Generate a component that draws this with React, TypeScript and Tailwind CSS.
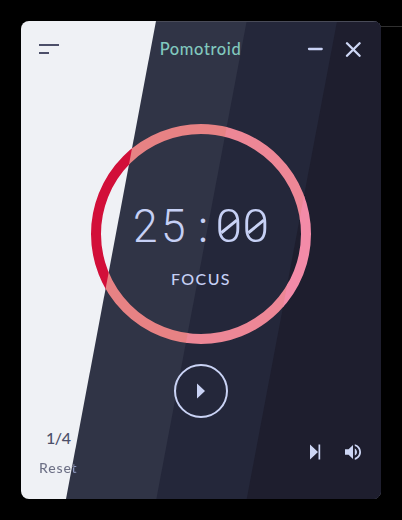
import type { ReactNode } from 'react';

const slices = [
  { clip: 'polygon(37.5% 0, 100% 0, 100% 100%, 12.5% 100%)', color: 'bg-[#303446]' },
  { clip: 'polygon(62.7% 0, 100% 0, 100% 100%, 37.6% 100%)', color: 'bg-[#24273a]' },
  { clip: 'polygon(87.8% 0, 100% 0, 100% 100%, 62.7% 100%)', color: 'bg-[#1e1e2e]' },
];

const ringSlices = [
  { id: 'light', points: '-70,-103 66,-103 -24,375 -70,375', color: '#d20f39' },
  { id: 'slate', points: '65,-103 156.5,-103 66.2,375 -25,375', color: '#e78284' },
  { id: 'navy', points: '155.7,-103 247,-103 156.7,375 65.4,375', color: '#ed8796' },
  { id: 'night', points: '246,-103 290,-103 290,375 155.7,375', color: '#f38ba8' },
];

function Backdrop() {
  return (
    <div className="absolute inset-0 bg-[#eff1f5]">
      {slices.map((s) => (
        <div key={s.color} className={`absolute inset-0 ${s.color}`} style={{ clipPath: s.clip }} />
      ))}
      <div className="absolute left-[135px] right-[5px] top-0 h-px bg-[#494b58]" />
    </div>
  );
}

function Dial({ children }: { children: ReactNode }) {
  return (
    <div className="relative h-[220px] w-[220px]">
      <svg className="absolute inset-0" width="220" height="220" viewBox="0 0 220 220" fill="none">
        {ringSlices.map((s) => (
          <g key={s.id}>
            <clipPath id={s.id}>
              <polygon points={s.points} />
            </clipPath>
            <circle cx="110" cy="110" r="105" stroke={s.color} strokeWidth="10" clipPath={`url(#${s.id})`} />
          </g>
        ))}
      </svg>
      <div className="relative flex flex-col items-center">{children}</div>
    </div>
  );
}

function Digit({ value }: { value: string }) {
  if (value === ':') {
    return <span className="-mt-[2px] flex w-[27.6px] justify-center pl-[4px] font-['Lato',sans-serif] text-[48px] font-light">:</span>;
  }
  return (
    <span className="relative flex w-[27.6px] justify-center">
      <span className={value === '0' ? 'scale-x-[1.04]' : '-translate-x-[0.5px] scale-x-[0.96]'}>{value}</span>
      {value === '0' && (
        <span className="absolute left-[4px] top-[25.5px] h-[2.6px] w-[20px] -rotate-[39deg] bg-[#cad3f5]" />
      )}
    </span>
  );
}

export default function App() {
  return (
    <div className="relative h-[520px] w-[402px] bg-black p-[21px] font-['Lato',sans-serif] text-[#c6d0f5]">
      <div className="absolute right-0 top-[26px] h-px w-[22px] bg-[#303030]" />
      <div className="relative flex h-[478px] w-[360px] flex-col overflow-hidden rounded-lg">
        <Backdrop />
        <header className="relative flex h-[56px] items-center justify-between pl-[18px] pr-[20px]">
          <button className="flex w-[55px] flex-col gap-[6px]" aria-label="Menu">
            <span className="h-[2px] w-[20px] bg-[#4c4f69]" />
            <span className="h-[2px] w-[10px] bg-[#4c4f69]" />
          </button>
          <h1 className="text-[16.5px] font-medium tracking-[0.6px] text-[#81c8be]">Pomotroid</h1>
          <div className="flex w-[54px] items-center justify-between">
            <svg width="16" height="16" viewBox="0 0 16 16" stroke="#cad3f5" strokeWidth="2.3" strokeLinecap="round">
              <path d="M2 8H14.7" />
            </svg>
            <svg width="16" height="16" viewBox="0 0 16 16" stroke="#cdd6f4" strokeWidth="2.3" strokeLinecap="round">
              <path d="M2 2.2L14.6 14.8M14.6 2.2L2 14.8" />
            </svg>
          </div>
        </header>
        <main className="relative flex flex-col items-center pt-[47px]">
          <Dial>
            <div className="mt-[75px] flex h-[54px] font-['Roboto',sans-serif] text-[46px] font-light leading-[54px]">
              {'25:00'.split('').map((c, i) => (
                <Digit key={i} value={c} />
              ))}
            </div>
            <p className="mt-[14px] text-[16px] font-medium leading-[24px] tracking-[1.4px]">FOCUS</p>
          </Dial>
          <button className="mt-[20px] flex h-[54px] w-[54px] items-center justify-center rounded-full border-2 border-[#cad3f5]" aria-label="Start">
            <svg width="8" height="16" viewBox="0 0 8 16" fill="#cad3f5">
              <path d="M0 .5L8 8L0 15.5Z" />
            </svg>
          </button>
        </main>
        <footer className="relative mt-[8px] flex justify-between pl-[18px] pr-[20px]">
          <div className="flex flex-col items-center text-[#4c4f69]">
            <p className="text-[16px] font-medium leading-[24px] tracking-[-0.4px]">1/4</p>
            <button className="mt-[7px] bg-[linear-gradient(100.7deg,#6c6f85_85%,#8e98bf_85%)] bg-clip-text text-[14px] font-medium leading-[21px] tracking-[0.85px] text-transparent">
              Reset
            </button>
          </div>
          <div className="mt-[18px] flex h-[16px] gap-[24px]">
            <svg width="11" height="16" viewBox="0 0 11 16" fill="#cdd6f4">
              <path d="M0 .5L8 8L0 15.5ZM8.5 .5H10.2V15.5H8.5Z" />
            </svg>
            <svg width="16" height="16" viewBox="3 3 18 18" fill="#cdd6f4">
              <path d="M3 9v6h4l5 5V4L7 9H3zm13.5 3c0-1.77-1.02-3.29-2.5-4.03v8.05c1.48-.73 2.5-2.25 2.5-4.02zM14 3.23v2.06c2.89.86 5 3.54 5 6.71s-2.11 5.85-5 6.71v2.06c4.01-.91 7-4.49 7-8.77s-2.99-7.86-7-8.77z" />
            </svg>
          </div>
        </footer>
      </div>
    </div>
  );
}
